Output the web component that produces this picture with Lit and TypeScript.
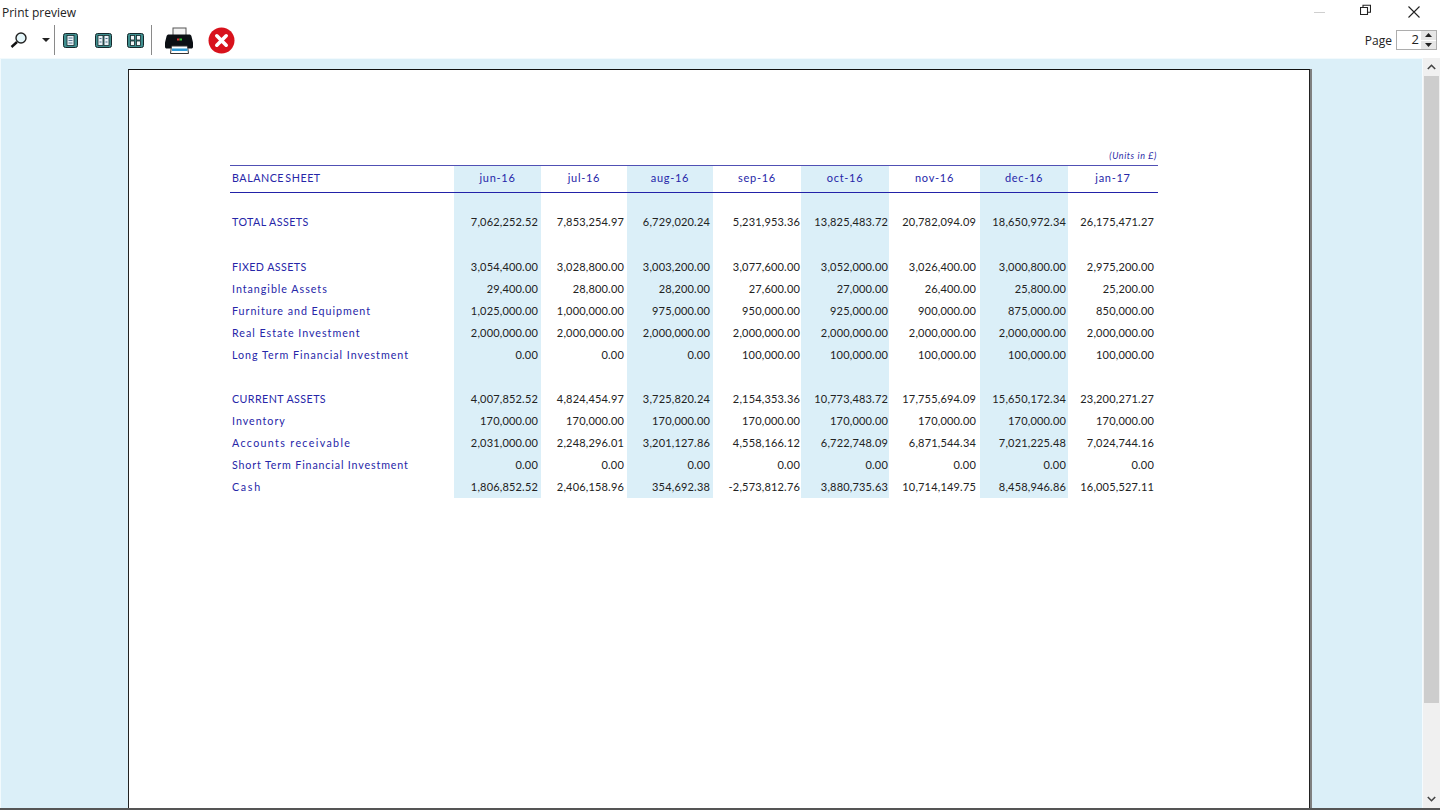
import { LitElement, html, css, svg } from "lit";
import { customElement } from "lit/decorators.js";

const cols = ["jun-16","jul-16","aug-16","sep-16","oct-16","nov-16","dec-16","jan-17"];
const insets = [3, 3, 3, 1, 1, 4, 2, 4];
type Row = { label?: string; cls?: string; values?: string[]; gap?: number };
const rows: Row[] = [
  { gap: 18 },
  { label: "TOTAL ASSETS", cls: "up", values: ["7,062,252.52","7,853,254.97","6,729,020.24","5,231,953.36","13,825,483.72","20,782,094.09","18,650,972.34","26,175,471.27"] },
  { gap: 23 },
  { label: "FIXED ASSETS", cls: "up", values: ["3,054,400.00","3,028,800.00","3,003,200.00","3,077,600.00","3,052,000.00","3,026,400.00","3,000,800.00","2,975,200.00"] },
  { label: "Intangible Assets", values: ["29,400.00","28,800.00","28,200.00","27,600.00","27,000.00","26,400.00","25,800.00","25,200.00"] },
  { label: "Furniture and Equipment", values: ["1,025,000.00","1,000,000.00","975,000.00","950,000.00","925,000.00","900,000.00","875,000.00","850,000.00"] },
  { label: "Real Estate Investment", values: ["2,000,000.00","2,000,000.00","2,000,000.00","2,000,000.00","2,000,000.00","2,000,000.00","2,000,000.00","2,000,000.00"] },
  { label: "Long Term Financial Investment", values: ["0.00","0.00","0.00","100,000.00","100,000.00","100,000.00","100,000.00","100,000.00"] },
  { gap: 22 },
  { label: "CURRENT ASSETS", cls: "up", values: ["4,007,852.52","4,824,454.97","3,725,820.24","2,154,353.36","10,773,483.72","17,755,694.09","15,650,172.34","23,200,271.27"] },
  { label: "Inventory", values: ["170,000.00","170,000.00","170,000.00","170,000.00","170,000.00","170,000.00","170,000.00","170,000.00"] },
  { label: "Accounts receivable", cls: "wide", values: ["2,031,000.00","2,248,296.01","3,201,127.86","4,558,166.12","6,722,748.09","6,871,544.34","7,021,225.48","7,024,744.16"] },
  { label: "Short Term Financial Investment", cls: "tight", values: ["0.00","0.00","0.00","0.00","0.00","0.00","0.00","0.00"] },
  { label: "Cash", cls: "wider", values: ["1,806,852.52","2,406,158.96","354,692.38","-2,573,812.76","3,880,735.63","10,714,149.75","8,458,946.86","16,005,527.11"] },
];

const pageIcon = (kind: number) => {
  const w = kind === 1 ? 15 : 17;
  const cells = kind === 1
    ? svg`<rect x="4" y="2.5" width="7" height="10" fill="#e8f2f6" stroke="#16282c" stroke-width=".8"/><path d="M5.5 5h4M5.5 7.5h4M5.5 10h4" stroke="#4a6a8a" stroke-width=".9"/>`
    : kind === 2
    ? svg`<rect x="3" y="2.5" width="5" height="10" fill="#e8f2f6" stroke="#16282c" stroke-width=".8"/><rect x="9" y="2.5" width="5" height="10" fill="#e8f2f6" stroke="#16282c" stroke-width=".8"/><path d="M4.5 5.5h2M4.5 9h2M10.5 5.5h2M10.5 9h2" stroke="#4a6a8a" stroke-width="1"/>`
    : svg`<rect x="3.5" y="2.5" width="4" height="4.5" fill="#f2f7f8" stroke="#16282c" stroke-width=".8"/><rect x="9.5" y="2.5" width="4" height="4.5" fill="#f2f7f8" stroke="#16282c" stroke-width=".8"/><rect x="3.5" y="8" width="4" height="4.5" fill="#f2f7f8" stroke="#16282c" stroke-width=".8"/><rect x="9.5" y="8" width="4" height="4.5" fill="#f2f7f8" stroke="#16282c" stroke-width=".8"/>`;
  return html`<svg width="${w}" height="15" viewBox="0 0 ${w} 15"><rect x=".5" y=".5" width="${w - 1}" height="14" rx="2" fill="#3f8f8f" stroke="#16282c"/>${cells}</svg>`;
};

@customElement("app-root")
export class AppRoot extends LitElement {
  static styles = css`
    :host { display: flex; flex-direction: column; width: 1440px; height: 810px; overflow: hidden; background: #fff; font-family: "Liberation Sans", Arial, sans-serif; }
    .title { height: 24px; flex: none; display: flex; align-items: center; justify-content: space-between; font-family: "Open Sans", sans-serif; font-size: 12px; color: #222; padding-left: 2px; }
    .win { display: flex; align-items: center; height: 24px; }
    .win svg { display: block; }
    .win .b1 { margin-right: 35px; }
    .win .b2 { margin: 0 37px 4px 0; }
    .win .b3 { margin-right: 20px; }
    .bar { height: 34px; flex: none; display: flex; align-items: center; box-sizing: border-box; padding-bottom: 2px; }
    .bar svg { display: block; flex: none; }
    .sep { width: 1px; height: 30px; background: #8a8a8a; flex: none; }
    .pager { margin-left: auto; display: flex; align-items: center; font-family: "Open Sans", sans-serif; font-size: 12px; color: #222; padding-right: 3px; }
    .spin { margin-left: 4px; width: 41px; height: 20px; box-sizing: border-box; border: 1px solid #adadad; display: flex; background: #fff; }
    .spin .val { flex: 1; text-align: right; font-size: 13px; line-height: 16px; padding-right: 1px; }
    .spin .btns { width: 15px; display: flex; flex-direction: column; gap: 1px; padding: 0 0 0 1px; }
    .spin .btn { flex: 1; background: #e6e6e6; display: flex; align-items: center; justify-content: center; }
    .main { flex: 1; min-height: 0; display: flex; }
    .preview { flex: 1; min-width: 0; background: #dbeff8; border-left: 1px solid #f2fafd; border-top: 1px solid #f2fafd; padding: 10px 0 0 127px; overflow: hidden; box-sizing: border-box; border-right: 1px solid #f5fbfe; }
    .paper { width: 1182px; height: 760px; box-sizing: border-box; background: #fff; border-top: 1.5px solid #111; border-left: 1.5px solid #222; border-right: 1.5px solid #222; box-shadow: 2px 0 0 #808080; padding: 81px 0 0 101px; }
    .scroll { width: 17px; flex: none; background: #f0f0f0; display: flex; flex-direction: column; align-items: center; }
    .arrow { height: 18px; flex: none; display: flex; align-items: center; justify-content: center; }
    .thumb { width: 15px; height: 627px; background: #cdcdcd; flex: none; }
    .spacer { flex: 1; }
    .foot { height: 2px; flex: none; background: #555; }
    .units { width: 928px; text-align: right; font: italic 9px/10px Lato, sans-serif; color: #2b2ba6; height: 13.5px; letter-spacing: .6px; box-sizing: border-box; padding-right: 1px; }
    .grid { display: grid; width: 928px; grid-template-columns: 224px 87px 86px 86px 88px 88px 91px 88px 90px; font: 11px/22px Lato, sans-serif; letter-spacing: .18px; color: #222; border-top: 1.5px solid #5050b4; }
    .c { white-space: nowrap; text-align: right; padding-right: 3px; }
    .l { text-align: left; padding: 0 0 0 2px; color: #2626a8; font-size: 10.7px; letter-spacing: .98px; }
    .up { letter-spacing: .42px; }
    .tight { letter-spacing: .85px; }
    .wide { letter-spacing: 1.35px; }
    .wider { letter-spacing: 1.7px; }
    .s { background: #dbeff8; }
    .h { height: 26px; line-height: 24px; text-align: center; padding: 0; color: #2626a8; letter-spacing: .7px; border-bottom: 1.5px solid #2222a8; }
    .l.hl { text-align: left; padding-left: 2px; letter-spacing: .55px; word-spacing: -2px; }
  `;

  render() {
    return html`
      <div class="title">
        <span>Print preview</span>
        <div class="win">
          <svg class="b1" width="11" height="3" viewBox="0 0 11 3"><path d="M0 1.5h11" stroke="#cfcfcf"/></svg>
          <svg class="b2" width="11" height="12" viewBox="0 0 11 12"><path d="M.5 3.5h7v7h-7zM3 3.5V1.2h7.5v7H7.5" fill="none" stroke="#222" stroke-width="1.1"/></svg>
          <svg class="b3" width="12" height="12" viewBox="0 0 12 12"><path d="M.5.5l11 11M11.5.5l-11 11" stroke="#222" stroke-width="1.1"/></svg>
        </div>
      </div>
      <div class="bar">
        <svg style="margin-left:10px" width="18" height="16" viewBox="0 0 18 16"><circle cx="11" cy="6" r="5" fill="#e4f6fa" stroke="#222" stroke-width="1.4"/><path d="M7 10l-5.5 5" stroke="#111" stroke-width="2.4"/></svg>
        <svg style="margin-left:14px" width="8" height="4" viewBox="0 0 8 4"><path d="M0 0h8L4 4z" fill="#222"/></svg>
        <div class="sep" style="margin-left:4px"></div>
        <div style="margin-left:8px;display:flex">${pageIcon(1)}</div>
        <div style="margin-left:17px;display:flex">${pageIcon(2)}</div>
        <div style="margin-left:15px;display:flex">${pageIcon(3)}</div>
        <div class="sep" style="margin-left:7px"></div>
        <svg style="margin-left:12px" width="30" height="27" viewBox="0 0 30 27">
          <rect x="9" y="1" width="13" height="8" fill="#f4f4f4" stroke="#555"/>
          <path d="M5 7.5h20c1.5 0 2 .5 2.5 2l1.5 6v4c0 1.5-.5 2-2 2H3c-1.500 0-2-.5-2-2v-4l1.500-6c.5-1.500 1-2 2.500-2z" fill="#0b0f14"/>
          <rect x="13" y="11.500" width="2.500" height="2" fill="#d33"/><rect x="15.500" y="11.500" width="2.500" height="2" fill="#3c3"/>
          <path d="M7.500 19h16l1 7.500h-18z" fill="#fff" stroke="#333"/>
          <rect x="8" y="21.500" width="15.500" height="2.500" fill="#2d9bd8"/>
        </svg>
        <svg style="margin-left:14px" width="27" height="27" viewBox="0 0 27 27"><circle cx="13.5" cy="13.5" r="13" fill="#d8121c"/><path d="M8.8 8.8l9.400 9.400M18.200 8.800l-9.400 9.400" stroke="#fff" stroke-width="3.600" stroke-linecap="round"/></svg>
        <div class="pager">
          <span>Page</span>
          <div class="spin">
            <div class="val">2</div>
            <div class="btns">
              <div class="btn"><svg width="7" height="4" viewBox="0 0 7 4"><path d="M0 4l3.5-4L7 4z" fill="#222"/></svg></div>
              <div class="btn"><svg width="7" height="4" viewBox="0 0 7 4"><path d="M0 0l3.5 4L7 0z" fill="#222"/></svg></div>
            </div>
          </div>
        </div>
      </div>
      <div class="main">
        <div class="preview">
          <div class="paper">
            <div class="units">(Units in £)</div>
            <div class="grid">
              <div class="c l h hl">BALANCE SHEET</div>
              ${cols.map((c, i) => html`<div class="c h ${i % 2 === 0 ? "s" : ""}">${c}</div>`)}
              ${rows.map((r) => r.gap
                ? html`<div style="height:${r.gap}px"></div>${cols.map((_, i) => html`<div class="${i % 2 === 0 ? "s" : ""}"></div>`)}`
                : html`<div class="c l ${r.cls ?? ""}">${r.label}</div>${r.values!.map((v, i) => html`<div class="c ${i % 2 === 0 ? "s" : ""}" style="padding-right:${insets[i]}px">${v}</div>`)}`)}
            </div>
          </div>
        </div>
        <div class="scroll">
          <div class="arrow"><svg width="9" height="6" viewBox="0 0 9 6"><path d="M.8 5l3.7-3.7L8.2 5" fill="none" stroke="#444" stroke-width="1.6"/></svg></div>
          <div class="thumb"></div>
          <div class="spacer"></div>
          <div class="arrow"><svg width="9" height="6" viewBox="0 0 9 6"><path d="M.8 1l3.7 3.7L8.2 1" fill="none" stroke="#444" stroke-width="1.6"/></svg></div>
        </div>
      </div>
      <div class="foot"></div>
    `;
  }
}
